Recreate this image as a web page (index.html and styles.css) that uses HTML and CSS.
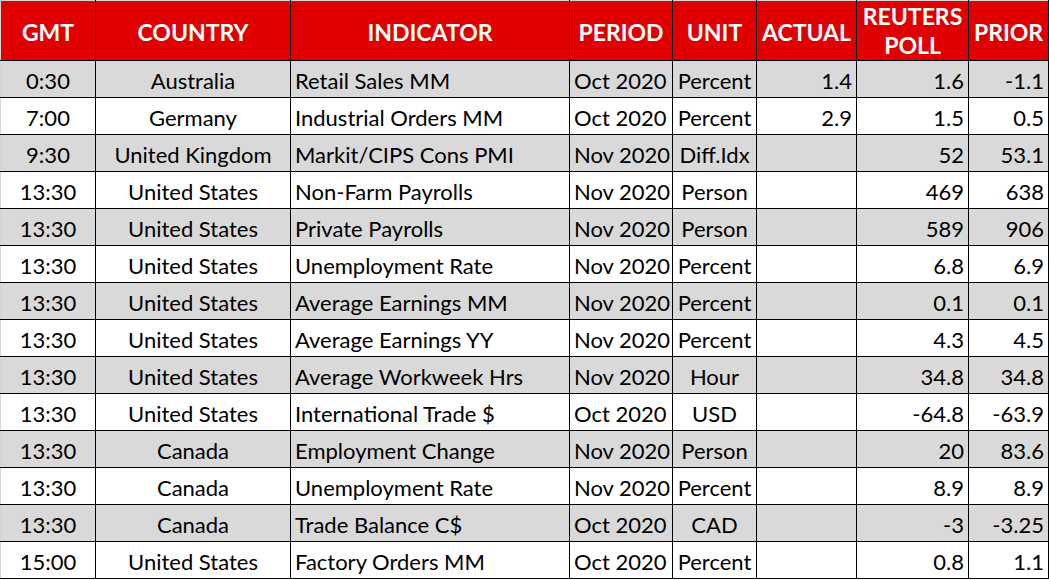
FILE: index.html
```html
<!DOCTYPE html>
<html>
<head>
<meta charset="utf-8">
<link rel="stylesheet" href="styles.css">
</head>
<body>
<table class="cal">
  <colgroup>
    <col class="c-gmt"><col class="c-country"><col class="c-ind"><col class="c-period"><col class="c-unit"><col class="c-actual"><col class="c-poll"><col class="c-prior">
  </colgroup>
  <thead>
    <tr>
      <th>GMT</th><th>COUNTRY</th><th>INDICATOR</th><th>PERIOD</th><th>UNIT</th><th>ACTUAL</th><th class="two">REUTERS<br>POLL</th><th>PRIOR</th>
    </tr>
  </thead>
  <tbody>
    <tr class="g"><td class="ctr">0:30</td><td class="ctr">Australia</td><td>Retail Sales MM</td><td>Oct 2020</td><td class="ctr">Percent</td><td class="num">1.4</td><td class="num">1.6</td><td class="num">-1.1</td></tr>
    <tr><td class="ctr">7:00</td><td class="ctr">Germany</td><td>Industrial Orders MM</td><td>Oct 2020</td><td class="ctr">Percent</td><td class="num">2.9</td><td class="num">1.5</td><td class="num">0.5</td></tr>
    <tr class="g"><td class="ctr">9:30</td><td class="ctr">United Kingdom</td><td>Markit/CIPS Cons PMI</td><td>Nov 2020</td><td class="ctr">Diff.Idx</td><td class="num"></td><td class="num">52</td><td class="num">53.1</td></tr>
    <tr><td class="ctr">13:30</td><td class="ctr">United States</td><td>Non-Farm Payrolls</td><td>Nov 2020</td><td class="ctr">Person</td><td class="num"></td><td class="num">469</td><td class="num">638</td></tr>
    <tr class="g"><td class="ctr">13:30</td><td class="ctr">United States</td><td>Private Payrolls</td><td>Nov 2020</td><td class="ctr">Person</td><td class="num"></td><td class="num">589</td><td class="num">906</td></tr>
    <tr><td class="ctr">13:30</td><td class="ctr">United States</td><td>Unemployment Rate</td><td>Nov 2020</td><td class="ctr">Percent</td><td class="num"></td><td class="num">6.8</td><td class="num">6.9</td></tr>
    <tr class="g"><td class="ctr">13:30</td><td class="ctr">United States</td><td>Average Earnings MM</td><td>Nov 2020</td><td class="ctr">Percent</td><td class="num"></td><td class="num">0.1</td><td class="num">0.1</td></tr>
    <tr><td class="ctr">13:30</td><td class="ctr">United States</td><td>Average Earnings YY</td><td>Nov 2020</td><td class="ctr">Percent</td><td class="num"></td><td class="num">4.3</td><td class="num">4.5</td></tr>
    <tr class="g"><td class="ctr">13:30</td><td class="ctr">United States</td><td>Average Workweek Hrs</td><td>Nov 2020</td><td class="ctr">Hour</td><td class="num"></td><td class="num">34.8</td><td class="num">34.8</td></tr>
    <tr><td class="ctr">13:30</td><td class="ctr">United States</td><td>International Trade $</td><td>Oct 2020</td><td class="ctr">USD</td><td class="num"></td><td class="num">-64.8</td><td class="num">-63.9</td></tr>
    <tr class="g"><td class="ctr">13:30</td><td class="ctr">Canada</td><td>Employment Change</td><td>Nov 2020</td><td class="ctr">Person</td><td class="num"></td><td class="num">20</td><td class="num">83.6</td></tr>
    <tr><td class="ctr">13:30</td><td class="ctr">Canada</td><td>Unemployment Rate</td><td>Nov 2020</td><td class="ctr">Percent</td><td class="num"></td><td class="num">8.9</td><td class="num">8.9</td></tr>
    <tr class="g"><td class="ctr">13:30</td><td class="ctr">Canada</td><td>Trade Balance C$</td><td>Oct 2020</td><td class="ctr">CAD</td><td class="num"></td><td class="num">-3</td><td class="num">-3.25</td></tr>
    <tr><td class="ctr">15:00</td><td class="ctr">United States</td><td>Factory Orders MM</td><td>Oct 2020</td><td class="ctr">Percent</td><td class="num"></td><td class="num">0.8</td><td class="num">1.1</td></tr>
  </tbody>
</table>
</body>
</html>
```

FILE: styles.css
```css
html, body {
  margin: 0;
  padding: 0;
  background: #ffffff;
}

.cal {
  border-collapse: collapse;
  table-layout: fixed;
  width: 1048px;
  font-family: "Lato", "Liberation Sans", sans-serif;
  color: #000000;
  border-top: 1px solid #d4d4d4;
  border-left: 1px solid #d4d4d4;
}

.c-gmt { width: 95px; }
.c-country { width: 195px; }
.c-ind { width: 279px; }
.c-period { width: 103px; }
.c-unit { width: 84px; }
.c-actual { width: 100px; }
.c-poll { width: 112px; }
.c-prior { width: 80px; }

.cal th {
  background: #e00000;
  color: #ffffff;
  font-weight: 700;
  font-size: 23px;
  height: 56px;
  padding: 3px 2px 0 2px;
  text-align: center;
  vertical-align: middle;
  border: 1px solid #000000;
  border-top-color: #d4d4d4;
  white-space: nowrap;
  line-height: 29px;
}

.cal th.two { padding-top: 0; padding-bottom: 0; }

.cal th:first-child { border-left-color: #d4d4d4; }

.cal td {
  font-size: 22px;
  height: 33px;
  padding: 3px 4px 0 4px;
  vertical-align: middle;
  border: 1px solid #000000;
  white-space: nowrap;
  line-height: 30px;
  text-align: left;
}

.cal td:first-child { border-left-color: #d4d4d4; }

.cal tr.g td { background: #d9d9d9; }

.cal td.ctr { text-align: center; }
.cal td.num { text-align: right; }
```
